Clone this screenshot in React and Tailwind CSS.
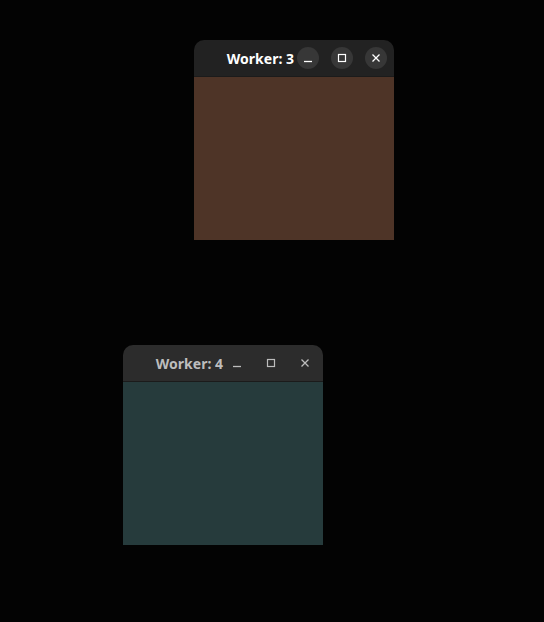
import React from 'react';

const windows = [
  { id: 3, left: 194, top: 40, active: true, body: 'bg-[#4e3427]' },
  { id: 4, left: 123, top: 345, active: false, body: 'bg-[#263b3c]' },
];

function TitleButton({ active, children }) {
  return (
    <div
      className={
        'flex h-[22px] w-[22px] items-center justify-center rounded-full ' +
        (active ? 'bg-[#373737] text-white' : 'text-[#bdbdbd]')
      }
    >
      {children}
    </div>
  );
}

function Window({ win }) {
  const { id, left, top, active, body } = win;
  return (
    <div className="absolute flex h-[200px] w-[200px] flex-col" style={{ left, top }}>
      <div
        className={
          'flex h-[37px] shrink-0 items-center justify-end gap-[12px] rounded-t-[10px] border-b border-[#1b1b1b] pr-[7px] ' +
          (active ? 'bg-[#222222]' : 'bg-[#2c2c2c]')
        }
      >
        <span
          className={
            'mr-[-9px] text-[14px] font-bold ' + (active ? 'text-white' : 'text-[#bdbdbd]')
          }
          style={{ fontFamily: '"Noto Sans", "DejaVu Sans", sans-serif' }}
        >
          Worker: {id}
        </span>
        <TitleButton active={active}>
          <svg width="10" height="10" viewBox="0 0 10 10">
            <path d="M1 8.5h8" stroke="currentColor" strokeWidth="1.3" fill="none" />
          </svg>
        </TitleButton>
        <TitleButton active={active}>
          <svg width="10" height="10" viewBox="0 0 10 10">
            <rect x="1.5" y="1.5" width="7" height="7" stroke="currentColor" strokeWidth="1.2" fill="none" />
          </svg>
        </TitleButton>
        <TitleButton active={active}>
          <svg width="10" height="10" viewBox="0 0 10 10">
            <path d="M1.5 1.5l7 7M8.5 1.5l-7 7" stroke="currentColor" strokeWidth="1.3" fill="none" />
          </svg>
        </TitleButton>
      </div>
      <div className={'flex-1 ' + body} />
    </div>
  );
}

export default function App() {
  return (
    <div className="relative h-[622px] w-[544px] overflow-hidden bg-[#030303]">
      {windows.map((w) => (
        <Window key={w.id} win={w} />
      ))}
    </div>
  );
}
